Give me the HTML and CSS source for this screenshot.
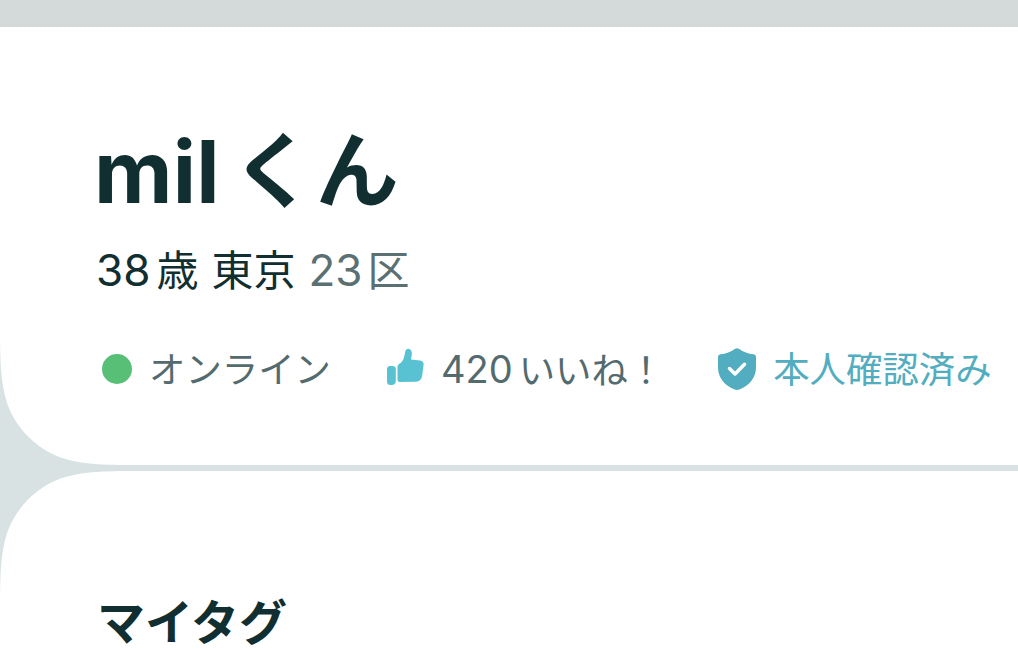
FILE: index.html
```
<!DOCTYPE html>
<html lang="ja">
<head>
    <meta charset="UTF-8">
    <meta name="viewport" content="width=device-width, initial-scale=1.0">
    <title>プロフィール</title>
    <link rel="stylesheet" href="styles.css">
</head>
<body>
    <main>
        <section class="card profile">
            <h1><span class="name">mil</span><span class="honorific">くん</span></h1>
            <div class="info">
                <span class="number">38</span><span class="age">歳</span><span class="region">東京</span><span class="number area">23</span><span class="area">区</span>
            </div>
            <div class="status">
                <div class="item online">
                    <span class="dot"></span>
                    <span class="kana">オンライン</span>
                </div>
                <div class="item likes">
                    <svg class="thumb" viewBox="0 0 38 38">
                        <path d="M3 18H5.500Q8.800 18 8.800 21V33Q8.800 37 4.500 37H3.500Q0 37 0 33.500V21.500Q0 18 3 18Z"/>
                        <path d="M10.500 20C10.500 17.500 11 16.700 12.800 15.600C15.300 14 16.500 11.500 17.200 8.500L18.300 3.500C18.800 1.600 20 .6 21.500 .8C24.200 1.200 25.200 3.600 24.800 6.500L24 11.500L33 12.400C35.800 12.800 37 14.300 36.600 17L35.200 27.500C34.600 31.500 32.500 33.500 29 33.700L13 34C11.300 34 10.500 33.200 10.500 31.500Z"/>
                    </svg>
                    <span class="count">420</span><span class="kana">いいね！</span>
                </div>
                <div class="item verified">
                    <svg class="shield" viewBox="0 0 38 42">
                        <path d="M17.200 .7Q19-.2 20.800 .7C25.500 4 30 5.700 35.500 6.300Q38 6.600 38 9V19.500C38 29.500 31.500 37.500 21.500 41.500Q19 42.300 16.500 41.500C6.500 37.500 0 29.500 0 19.500V9Q0 6.600 2.500 6.300C8 5.700 12.500 4 17.200 .7Z"/>
                        <path class="check" d="M11.500 20.500L17 26L26.500 16.300"/>
                    </svg>
                    <span class="kana">本人確認済み</span>
                </div>
            </div>
        </section>
        <section class="card tags">
            <h2>マイタグ</h2>
        </section>
    </main>
</body>
</html>
```
FILE: styles.css
```
body {
    font-family: Inter, "Noto Sans CJK JP", sans-serif;
    margin: 0;
    padding: 0;
    height: 650px;
    background-color: #d9e2e3;
    border-top: 27px solid #d3dad9;
    box-sizing: border-box;
    color: #112e30;
}

main {
    display: flex;
    flex-direction: column;
    gap: 6px;
}

.card {
    background-color: #fff;
    box-sizing: border-box;
    padding-left: 98px;
}

.profile {
    height: 438px;
    padding-top: 95px;
    clip-path: path("M0 0H1018V438H148.3C105.6 438 84.2 438 61.3 430.7C36.2 421.6 16.4 401.8 7.3 376.7C0 353.8 0 332.4 0 289.7Z");
}

.tags {
    height: 179px;
    padding-top: 124px;
    clip-path: path("M1018 0H148.3C105.6 0 84.2 0 61.3 7.3C36.2 16.4 16.4 36.2 7.3 61.3C0 84.2 0 105.6 0 148.3V300H1018Z");
}

h1,
h2 {
    margin: 0;
}

h1 {
    display: flex;
    height: 100px;
    line-height: 100px;
    font-weight: 700;
}

.name {
    margin-left: -4px;
    font-size: 86px;
    letter-spacing: 0.2px;
}

.honorific {
    margin: -1px 0 0 12px;
    font-size: 83px;
    letter-spacing: 1px;
}

.info {
    display: flex;
    align-items: baseline;
    height: 60px;
    margin: 18px 0 0 -2px;
    line-height: 60px;
    font-size: 42px;
}

.number {
    font-size: 44px;
}

.age {
    margin-left: 6px;
}

.region {
    margin-left: 13px;
}

.number.area {
    margin-left: 13px;
}

.area {
    margin-left: 5px;
    color: #5b7073;
}

.status {
    display: flex;
    align-items: center;
    height: 50px;
    margin-top: 44px;
    color: #536b6e;
    font-size: 36.4px;
    line-height: 50px;
    white-space: nowrap;
}

.item {
    display: flex;
    align-items: baseline;
}

.kana {
    position: relative;
    top: 1px;
}

.dot {
    width: 30px;
    height: 30px;
    margin: 0 17px 0 4px;
    align-self: center;
    border-radius: 50%;
    background-color: #58bf76;
}

.likes {
    margin-left: 56px;
}

.thumb {
    width: 38px;
    height: 38px;
    margin: -4px 16px 0 0;
    align-self: center;
    fill: #58c2d3;
}

.count {
    margin-right: 6px;
    font-size: 38px;
}

.verified {
    margin-left: 54px;
    color: #51adbf;
}

.shield {
    width: 38px;
    height: 42px;
    margin-right: 17px;
    align-self: center;
    fill: #51adbf;
}

.check {
    fill: none;
    stroke: #fff;
    stroke-width: 3.5;
    stroke-linecap: round;
    stroke-linejoin: round;
}

h2 {
    margin-left: -1px;
    font-size: 48px;
    line-height: 55px;
}
```
